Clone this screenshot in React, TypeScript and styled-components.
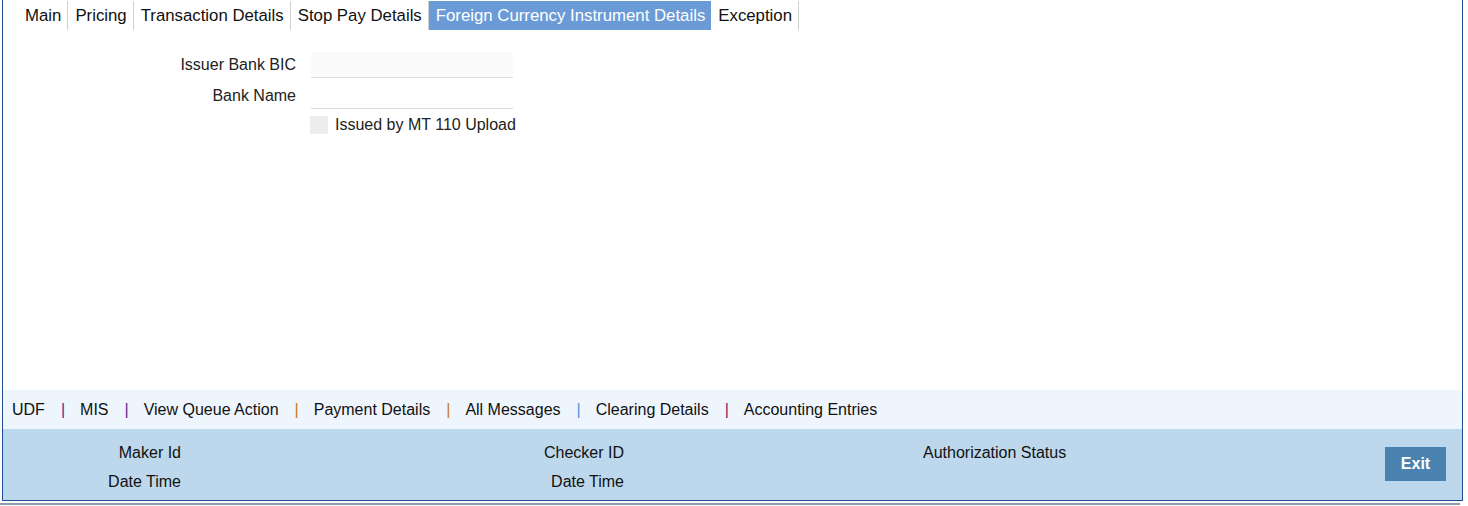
import React from "react";
import styled, { createGlobalStyle } from "styled-components";

const GlobalStyle = createGlobalStyle`
  body {
    margin: 0;
    background: #ffffff;
    font-family: "Liberation Sans", Arial, sans-serif;
    color: #111;
  }
`;

const Page = styled.div`
  width: 1468px;
  height: 506px;
  position: relative;
`;

const Frame = styled.div`
  margin-left: 2px;
  width: 1459px;
  height: 500px;
  border: 1px solid #1f4e96;
  border-top: none;
  display: flex;
  flex-direction: column;
`;

const BottomRule = styled.div`
  margin-top: 2px;
  width: 1460px;
  height: 2px;
  background: #8a9bb0;
`;

const TabRow = styled.div`
  display: flex;
  height: 31px;
  padding-left: 15px;
  padding-top: 1px;
  box-sizing: border-box;
`;

const Tab = styled.div<{ $active?: boolean }>`
  height: 29px;
  padding: 0 6px 0 7px;
  display: flex;
  align-items: center;
  font-size: 16.8px;
  color: ${(p) => (p.$active ? "#ffffff" : "#111")};
  background: ${(p) => (p.$active ? "#6b9bd6" : "transparent")};
  border-right: ${(p) => (p.$active ? "none" : "1px solid #d0d0d0")};
  white-space: nowrap;
`;

const Form = styled.div`
  padding-top: 21px;
  display: grid;
  grid-template-columns: 293px 202px;
  column-gap: 15px;
  row-gap: 5px;
  align-items: center;
`;

const Label = styled.div`
  text-align: right;
  font-size: 16px;
  color: #222;
`;

const Input = styled.div<{ $shaded?: boolean }>`
  height: 25px;
  background: ${(p) => (p.$shaded ? "#fafafa" : "#ffffff")};
  border-bottom: 1px solid #dcdcdc;
`;

const CheckRow = styled.label`
  grid-column: 2 / span 1;
  margin-top: 2px;
  margin-left: -1px;
  display: flex;
  align-items: center;
  gap: 7px;
  font-size: 16px;
  color: #222;
  white-space: nowrap;
`;

const CheckBox = styled.span`
  flex: none;
  width: 18px;
  height: 18px;
  background: #ededed;
`;

const Spacer = styled.div`
  flex: 1;
`;

const LinkBar = styled.div`
  height: 39px;
  background: #eef5fd;
  display: flex;
  align-items: center;
  padding-left: 9px;
  font-size: 16px;
`;

const LinkItem = styled.span`
  color: #111;
`;

const Sep = styled.span<{ $color: string }>`
  color: ${(p) => p.$color};
  margin: 0 15px 0 16px;
`;

const Footer = styled.div`
  height: 71px;
  background: #bdd8ec;
  display: flex;
  align-items: flex-start;
`;

const AuditGrid = styled.div`
  display: grid;
  grid-template-columns: 178px 443px 299px 143px;
  grid-template-rows: 18px 18px;
  row-gap: 11px;
  padding-top: 15px;
  font-size: 16px;
  color: #111;
`;

const AuditLabel = styled.div<{ $align?: string }>`
  text-align: ${(p) => p.$align || "right"};
  line-height: 18px;
  white-space: nowrap;
`;

const ExitButton = styled.button`
  margin-left: auto;
  margin-right: 16px;
  margin-top: 18px;
  width: 61px;
  height: 34px;
  border: none;
  background: #4a83b0;
  color: #fff;
  font-family: "Liberation Sans", Arial, sans-serif;
  font-weight: 700;
  font-size: 16px;
  padding: 0;
`;

const tabs = [
  "Main",
  "Pricing",
  "Transaction Details",
  "Stop Pay Details",
  "Foreign Currency Instrument Details",
  "Exception",
];

const links: { name: string; sep?: string }[] = [
  { name: "UDF", sep: "#5a2a8c" },
  { name: "MIS", sep: "#5a2a8c" },
  { name: "View Queue Action", sep: "#c47a10" },
  { name: "Payment Details", sep: "#c47a10" },
  { name: "All Messages", sep: "#4a90d9" },
  { name: "Clearing Details", sep: "#8b1a5a" },
  { name: "Accounting Entries" },
];

export default function App() {
  return (
    <Page>
      <GlobalStyle />
      <Frame>
        <TabRow>
          {tabs.map((t) => (
            <Tab key={t} $active={t.startsWith("Foreign")}>
              {t}
            </Tab>
          ))}
        </TabRow>
        <Form>
          <Label>Issuer Bank BIC</Label>
          <Input $shaded />
          <Label>Bank Name</Label>
          <Input />
          <CheckRow>
            <CheckBox />
            Issued by MT 110 Upload
          </CheckRow>
        </Form>
        <Spacer />
        <LinkBar>
          {links.map((l) => (
            <React.Fragment key={l.name}>
              <LinkItem>{l.name}</LinkItem>
              {l.sep && <Sep $color={l.sep}>|</Sep>}
            </React.Fragment>
          ))}
        </LinkBar>
        <Footer>
          <AuditGrid>
            <AuditLabel>Maker Id</AuditLabel>
            <AuditLabel>Checker ID</AuditLabel>
            <div />
            <AuditLabel>Authorization Status</AuditLabel>
            <AuditLabel>Date Time</AuditLabel>
            <AuditLabel>Date Time</AuditLabel>
            <div />
            <div />
          </AuditGrid>
          <ExitButton>Exit</ExitButton>
        </Footer>
      </Frame>
      <BottomRule />
    </Page>
  );
}
